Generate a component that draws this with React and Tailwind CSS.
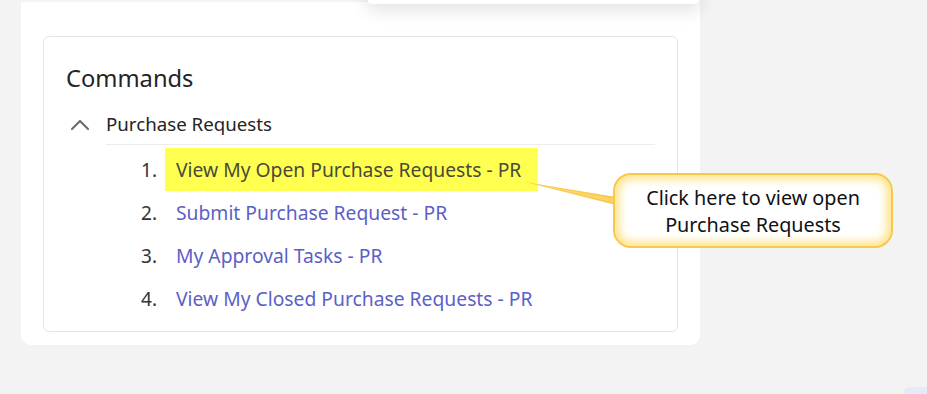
import { ChevronUp } from 'lucide-react'

const commands = [
  'View My Open Purchase Requests - PR',
  'Submit Purchase Request - PR',
  'My Approval Tasks - PR',
  'View My Closed Purchase Requests - PR',
]

const font = { fontFamily: '"Noto Sans", "Open Sans", sans-serif' }

const App = () => {
  return (
    <div className="relative w-[927px] h-[394px] overflow-hidden bg-[#f3f3f3] font-['Noto_Sans',sans-serif]">
      {/* main panel */}
      <div className="ml-[21px] mt-[2px] w-[679px] h-[343px] bg-white rounded-b-[10px] pl-[22px] pt-[34px]">
        <div className="w-[635px] h-[296px] border border-[#e3e3e3] rounded-[6px] pl-[22px] pt-[24px]">
          <h2 className="text-[23.7px] leading-[34px] text-[#242424] font-normal">Commands</h2>

          <div className="mt-[10px] flex">
            <div className="w-[40px] h-[40px] flex items-center ml-[-2px] mr-[2px]">
              <ChevronUp className="w-[32px] h-[32px] text-[#6e6e6e]" strokeWidth={1.6} />
            </div>
            <div className="w-[549px]">
              <div className="h-[40px] flex items-center text-[18.7px] text-[#242424] border-b border-[#ececec]">
                Purchase Requests
              </div>
              <ol className="pt-[3px]">
                {commands.map((c, i) => (
                  <li key={c} className="flex items-stretch h-[43px]">
                    <span className="w-[51px] text-right text-[19px] text-[#333] flex items-center justify-end pt-[2px]">{i + 1}.</span>
                    <span
                      className={
                        i === 0
                          ? 'ml-[8px] pl-[11px] pr-[17px] pt-[2px] flex items-center text-[19.3px] text-[#4a4a3a] bg-[#ffff4f]'
                          : 'ml-[8px] pl-[11px] pt-[2px] flex items-center text-[19.3px] text-[#5b5fc7]'
                      }
                    >
                      {c}
                    </span>
                  </li>
                ))}
              </ol>
            </div>
          </div>
        </div>
      </div>

      {/* popup peeking from the top */}
      <div className="absolute left-[367px] top-[-20px] w-[333px] h-[24px] bg-white rounded-b-[6px] shadow-[0_6px_18px_rgba(0,0,0,0.12)]" />

      {/* callout pointer */}
      <svg className="absolute left-[520px] top-[175px]" width="100" height="40" viewBox="0 0 100 40">
        <polygon points="5,7 96,22 96,30" fill="#f8c94a" />
        <polygon points="5,7 96,24 96,28" fill="#fbd56a" />
      </svg>

      {/* callout */}
      <div
        className="absolute left-[613px] top-[173px] w-[280px] h-[75px] rounded-[18px] border-2 border-[#f8c84a] bg-white shadow-[inset_0_0_10px_4px_rgba(255,215,90,0.75)] flex flex-col items-center justify-center text-[19.8px] leading-[27px] text-[#111]"
        style={font}
      >
        <span>Click here to view open</span>
        <span>Purchase Requests</span>
      </div>

      {/* bottom-right bubble */}
      <div className="absolute left-[903px] top-[387px] w-[40px] h-[20px] rounded-[8px] bg-[#e8e9f7]" />
    </div>
  )
}

export default App
